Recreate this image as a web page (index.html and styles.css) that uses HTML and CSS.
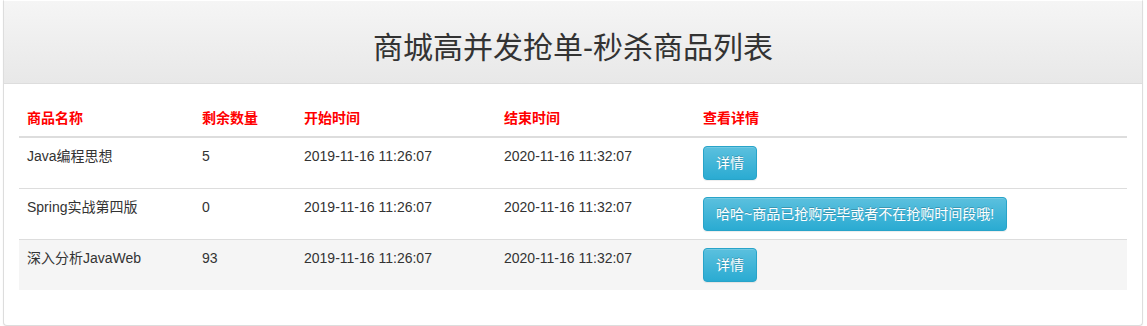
FILE: index.html
```html
<!DOCTYPE html>
<html lang="zh-CN">
<head>
<meta charset="utf-8">
<title>秒杀商品列表</title>
<link rel="stylesheet" href="styles.css">
</head>
<body>
<div class="panel">
  <div class="panel-heading">
    <h2 class="panel-title">商城高并发抢单-秒杀商品列表</h2>
  </div>
  <div class="panel-body">
    <table class="goods-table">
      <thead>
        <tr>
          <th class="col-name">商品名称</th>
          <th class="col-stock">剩余数量</th>
          <th class="col-start">开始时间</th>
          <th class="col-end">结束时间</th>
          <th>查看详情</th>
        </tr>
      </thead>
      <tbody>
        <tr>
          <td>Java编程思想</td>
          <td>5</td>
          <td>2019-11-16 11:26:07</td>
          <td>2020-11-16 11:32:07</td>
          <td><a class="btn btn-info" href="#">详情</a></td>
        </tr>
        <tr>
          <td>Spring实战第四版</td>
          <td>0</td>
          <td>2019-11-16 11:26:07</td>
          <td>2020-11-16 11:32:07</td>
          <td><a class="btn btn-info" href="#">哈哈~商品已抢购完毕或者不在抢购时间段哦!</a></td>
        </tr>
        <tr class="row-active">
          <td>深入分析JavaWeb</td>
          <td>93</td>
          <td>2019-11-16 11:26:07</td>
          <td>2020-11-16 11:32:07</td>
          <td><a class="btn btn-info" href="#">详情</a></td>
        </tr>
      </tbody>
    </table>
  </div>
</div>
</body>
</html>
```
FILE: styles.css
```css
* {
  box-sizing: border-box;
}

html, body {
  margin: 0;
  padding: 0;
  background: #fff;
}

body {
  font-family: "Liberation Sans", Arial, "Noto Sans CJK SC", sans-serif;
  font-size: 14px;
  line-height: 20px;
  color: #333;
}

.panel {
  margin: 0 4px 0 3px;
  border: 1px solid #ddd;
  border-top-color: transparent;
  border-radius: 0 0 4px 4px;
  background: #fff;
  box-shadow: 0 1px 2px rgba(0, 0, 0, 0.05);
}

.panel-heading {
  padding: 10px 15px 9px;
  border-bottom: 1px solid #ddd;
  background: linear-gradient(to bottom, #f5f5f5 0%, #e8e8e8 100%);
}

.panel-title {
  margin: 20px 0 10px;
  text-align: center;
  font-weight: normal;
  font-size: 30px;
  line-height: 33px;
  color: #333;
}

.panel-body {
  padding: 16px 15px 15px;
}

.goods-table {
  width: 100%;
  margin-bottom: 20px;
  border-collapse: collapse;
  border-spacing: 0;
}

.goods-table th,
.goods-table td {
  padding: 8px;
  text-align: left;
  vertical-align: top;
  line-height: 20px;
}

.goods-table th {
  color: #f00;
  font-weight: bold;
  vertical-align: bottom;
  border-bottom: 2px solid #ddd;
}

.goods-table td {
  border-top: 1px solid #ddd;
}

.col-name { width: 175px; }
.col-stock { width: 102px; }
.col-start { width: 200px; }
.col-end { width: 199px; }

.row-active td {
  background: #f5f5f5;
}

.btn {
  display: inline-block;
  padding: 6px 12px;
  font-size: 14px;
  line-height: 20px;
  color: #fff;
  text-decoration: none;
  text-shadow: 0 -1px 0 rgba(0, 0, 0, 0.2);
  border: 1px solid #28a4c9;
  border-radius: 4px;
  white-space: nowrap;
  box-shadow: inset 0 1px 0 rgba(255, 255, 255, 0.15), 0 1px 1px rgba(0, 0, 0, 0.075);
}

.btn-info {
  background: linear-gradient(to bottom, #5bc0de 0%, #2aabd2 100%);
}
```
